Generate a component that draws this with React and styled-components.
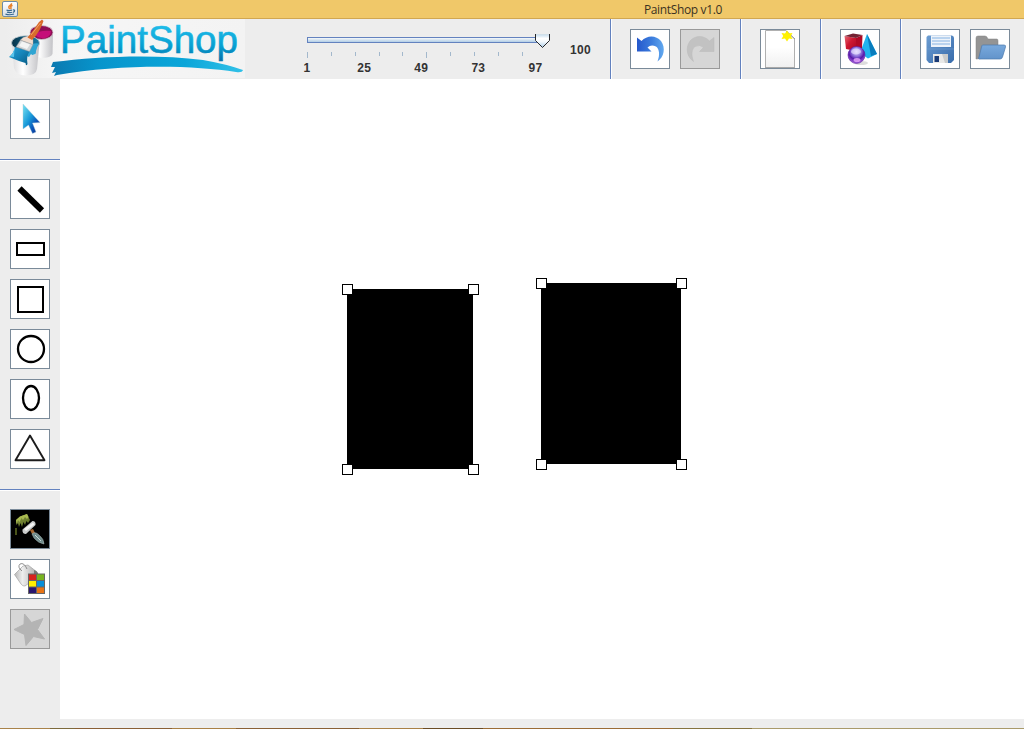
import React from 'react';
import styled, { createGlobalStyle, css } from 'styled-components';

const GlobalStyle = createGlobalStyle`
  * { box-sizing: border-box; }
  body { margin: 0; background: #ededed; overflow: hidden; }
  svg { display: block; }
`;

const Window = styled.div`
  width: 1024px;
  height: 729px;
  display: flex;
  flex-direction: column;
  background: #ededed;
  font-family: 'Liberation Sans', Arial, sans-serif;
`;

const TitleBar = styled.header`
  height: 19px;
  flex: none;
  display: flex;
  align-items: center;
  background: #f0c869;
  border-bottom: 1px solid #d1a751;
  padding-left: 2px;
`;

const Title = styled.h1`
  flex: 1;
  margin: 0;
  padding: 2px 0 0 324px;
  text-align: center;
  font: 400 12px/18px 'Open Sans', sans-serif;
  letter-spacing: -0.35px;
  color: #3b3222;
`;

const Toolbar = styled.div`
  height: 60px;
  flex: none;
  display: flex;
`;

const Logo = styled.div`
  width: 245px;
  height: 60px;
  flex: none;
`;

const SizeControl = styled.div`
  width: 365px;
  height: 60px;
  display: flex;
  padding-left: 50px;
`;

const Slider = styled.div`
  width: 260px;
  padding-top: 15px;
`;

const SliderLabels = styled.div`
  display: grid;
  grid-template-columns: repeat(5, 57.1px);
  margin: -1px 0 0 -16.5px;
  width: 290px;
  text-align: center;
  font: bold 12px/14px 'Liberation Sans', sans-serif;
  letter-spacing: 0.2px;
  color: #333;
`;

const SizeValue = styled.output`
  margin-left: 15px;
  padding-top: 24px;
  font: bold 12px/14px 'Liberation Sans', sans-serif;
  letter-spacing: 0.3px;
  color: #333;
`;

const ToolGroup = styled.div`
  display: flex;
  align-items: center;
  gap: 10px;
  width: ${(p) => p.$width}px;
  padding-left: 19px;
  border-left: 1px solid #6382bf;
  box-shadow: inset 1px 0 #fff;
`;

const ToolButton = styled.button`
  width: 40px;
  height: 40px;
  flex: none;
  display: block;
  padding: 0;
  overflow: hidden;
  border: 1px solid #7a8a99;
  background: ${(p) => (p.$dark ? '#000' : '#fff')};
  ${(p) =>
    p.disabled &&
    css`
      border-color: #999;
      background: #d6d6d6;
    `}
`;

const Workspace = styled.div`
  height: 640px;
  display: flex;
`;

const Sidebar = styled.aside`
  width: 60px;
  flex: none;
`;

const SideGroup = styled.div`
  display: flex;
  flex-direction: column;
  align-items: center;
  gap: 10px;
  padding: 20px 0;
  & + & {
    border-top: 1px solid #6382bf;
    box-shadow: inset 0 1px #fff;
    padding-top: 19px;
  }
`;

const Canvas = styled.main`
  position: relative;
  flex: 1;
  background: #fff;
`;

const Shape = styled.div`
  position: absolute;
  left: ${(p) => p.$x}px;
  top: ${(p) => p.$y}px;
  width: ${(p) => p.$w}px;
  height: ${(p) => p.$h}px;
  background: #000;
`;

const Handle = styled.i`
  position: absolute;
  left: calc(${(p) => p.$h * 100}% - 5px);
  top: calc(${(p) => p.$v * 100}% - 5px);
  width: 11px;
  height: 11px;
  background: #fff;
  border: 1px solid #000;
`;

const StatusStrip = styled.footer`
  height: 10px;
  flex: none;
  border-bottom: 1px solid;
  border-image: linear-gradient(90deg, #a9834a 0 51px, #7d6a3c 51px 76px, #8a5f35 76px 173px, #a98045 173px 237px,
    #8a6035 237px 359px, #a98045 359px 423px, #6b4c25 423px 483px, #9b6c35 483px 673px, #86743f 673px 752px, #a99a6a 752px) 1;
`;

const Icon = ({ children }) => (
  <svg width="38" height="38" viewBox="1 1 38 38">{children}</svg>
);

const JavaIcon = () => (
  <svg width="16" height="16" viewBox="0 0 16 16">
    <defs>
      <linearGradient id="jbg" x2="0" y2="1"><stop stopColor="#fff" /><stop offset="1" stopColor="#d5dfe6" /></linearGradient>
    </defs>
    <rect x=".5" y=".5" width="15" height="15" rx="1.5" fill="url(#jbg)" stroke="#6d8ba3" />
    <path d="M9.5 2.2C10 4 6.400 4.500 6.800 6.200Q7 7 7.700 8M10.500 4.300C8.300 5.300 8.600 6 9 6.600Q9.300 7.400 8.500 8" fill="none" stroke="#e8822c" strokeWidth="1.500" />
    <path d="M4.500 9.200Q7 9.900 10 9.200M5 11.200Q8 12 10 11.200M3.500 13.200Q8 14.400 12 13M10.800 9Q13 8.500 12.500 10T10.800 11" fill="none" stroke="#38698f" strokeWidth="1.200" />
  </svg>
);

const LogoArt = () => (
  <svg width="245" height="60" viewBox="0 19 245 60">
    <defs>
      <linearGradient id="lbg"><stop stopColor="#ededed" /><stop offset=".25" stopColor="#f6f6f6" /><stop offset="1" stopColor="#f3f3f3" /></linearGradient>
      <linearGradient id="ltext" gradientUnits="userSpaceOnUse" x1="0" y1="25" x2="0" y2="60"><stop stopColor="#20bdea" /><stop offset=".6" stopColor="#07a0d2" /><stop offset="1" stopColor="#0673ab" /></linearGradient>
      <linearGradient id="swoosh"><stop stopColor="#0b79b0" /><stop offset=".25" stopColor="#0795cc" /><stop offset=".7" stopColor="#0ba6d9" /><stop offset="1" stopColor="#31c1e8" /></linearGradient>
      <linearGradient id="can"><stop stopColor="#dcdcde" /><stop offset=".4" stopColor="#fff" /><stop offset="1" stopColor="#c2c2c6" /></linearGradient>
      <linearGradient id="blueP" x2="1" y2="1"><stop stopColor="#2ba3d6" /><stop offset=".5" stopColor="#1583b8" /><stop offset="1" stopColor="#0a587e" /></linearGradient>
      <linearGradient id="rim"><stop stopColor="#083247" /><stop offset=".6" stopColor="#0e6288" /><stop offset="1" stopColor="#1b7ba6" /></linearGradient>
    </defs>
    <rect x="5" y="19" width="240" height="59" fill="url(#lbg)" />
    <path d="M30 33H53L52.500 54Q51 58 41 58L38 57Z" fill="url(#can)" />
    <ellipse cx="41.500" cy="32.500" rx="11.500" ry="7" fill="#8f0f55" stroke="#d0ccce" strokeWidth=".8" />
    <path d="M35 35Q38 30 51 31Q51 37 43 38.500Q38 38 35 35Z" fill="#c50e79" />
    <path d="M12 43L14 68Q16 75.500 26 75.500Q36 75.500 37 69L39.500 43Z" fill="url(#can)" />
    <ellipse cx="25.500" cy="43" rx="14" ry="7.300" fill="url(#rim)" stroke="#c4cfd4" strokeWidth=".8" />
    <path d="M28 49Q32 42 38.500 43.500Q37 48 36 51Q36 55 34 54Q33 56 31 54L29 57L27 56Z" fill="#2fa5d3" />
    <path d="M15 47L30 51Q26 56 27.500 64Q26 67 25.500 63Q22 62 19 61Q14 59 9 57Q14 53 15 47Z" fill="url(#blueP)" />
    <path d="M14.500 49Q13 54 10 56.500L14 57Z" fill="#59c5ed" />
    <path d="M20.500 40L33 44.500L29.500 51.500L16 47Z" fill="#d4d7d9" stroke="#8f979c" strokeWidth=".5" />
    <path d="M22 41.500L30 44.500L27 49L19 46Z" fill="#f4f4f4" />
    <path d="M23 37.500L28 36L33 39.500L33 44.500L20.500 40Z" fill="#f0ddd0" stroke="#b5aaa4" strokeWidth=".4" />
    <path d="M27.500 37.500Q34 30 39 22L42 19.500L43.500 21Q40 32 32 40Z" fill="#d86b2c" />
    <path d="M31 35L40.500 23" stroke="#f2a268" strokeWidth="1" />
    <text x="60" y="53" textLength="178" lengthAdjust="spacingAndGlyphs" fontFamily="Liberation Sans" fontSize="38" fill="url(#ltext)" stroke="url(#ltext)" strokeWidth=".6">PaintShop</text>
    <path d="M53 62C99 56 157 54 203 60Q226 64 243 70Q242 73 236 72C193 65 120 64 57 75L54 76L56 72L52 73L55 67L51 67Z" fill="url(#swoosh)" />
  </svg>
);

const SliderTrack = () => (
  <svg width="260" height="28" viewBox="295 34 260 28">
    <defs>
      <linearGradient id="track" x2="0" y2="1"><stop stopColor="#fff" /><stop offset=".3" stopColor="#e4edf4" /><stop offset="1" stopColor="#a9c8e4" /></linearGradient>
      <linearGradient id="thumb" x2="0" y2="1"><stop stopColor="#c5dced" /><stop offset=".3" stopColor="#fff" /><stop offset=".55" stopColor="#f4f9fd" /><stop offset="1" stopColor="#abcce8" /></linearGradient>
    </defs>
    <rect x="307.500" y="37.500" width="240" height="5" fill="url(#track)" stroke="#6382bf" />
    <path d="M535.500 34.500H549.500V40.500L542.500 47.500L535.500 40.500Z" fill="url(#thumb)" />
    <path d="M535.500 34V40.500L542.500 47.500L549.500 40.500V34" fill="none" stroke="#24272b" />
    <path d="M536 34.500H549" stroke="#d0dfe9" />
    {[307, 331, 355, 379, 402, 426, 450, 474, 498, 522].map((x, i) => (
      <rect key={x} x={x} y="52" width="1" height={i % 5 ? 4 : 6} fill="#a3b8cc" />
    ))}
  </svg>
);

const UndoIcon = () => (
  <Icon>
    <defs><linearGradient id="undo"><stop stopColor="#2558cc" /><stop offset=".55" stopColor="#3c7ddd" /><stop offset="1" stopColor="#62a9ef" /></linearGradient></defs>
    <path d="M7 8.500L11.500 12C17 6 26 6 31 12C36 19 34 28 27.500 32.500C30 26 29.500 20 26 17.500Q21 15 17.500 18.500L21.500 22.500H7Z" fill="url(#undo)" />
  </Icon>
);

const RedoIcon = () => (
  <Icon>
    <path d="M34 8.500L29.500 12C24 6 15 6 10 12C5 19 7 28 13.500 32.500C11 26 11.500 20 15 17.500Q20 15 23.500 18.500L19.500 22.500H34Z" fill="#c2c2c2" stroke="#bababa" strokeWidth=".5" />
  </Icon>
);

const NewIcon = () => (
  <Icon>
    <defs><linearGradient id="page" x2="0" y2="1"><stop offset=".45" stopColor="#fff" /><stop offset="1" stopColor="#f0f0f0" /></linearGradient></defs>
    <path d="M5.500 1.500H26L34.500 10V38.500H5.500Z" fill="url(#page)" stroke="#b0b0b0" />
    <path d="M5 38.500H35" stroke="#a8a8a8" />
    <path d="M26 2L35 10" stroke="#999" />
    <path d="M27 1.500L29 4.500L32.500 4L30.800 7L32.500 10L29 9.600L27 12.500L25 9.600L21.500 10L23.200 7L21.500 4L25 4.500Z" fill="#fff100" />
  </Icon>
);

const ShapesIcon = () => (
  <Icon>
    <defs>
      <linearGradient id="cube" x2="1" y2="1"><stop stopColor="#e56a76" /><stop offset=".45" stopColor="#ce1831" /><stop offset="1" stopColor="#a80522" /></linearGradient>
      <radialGradient id="ball" cx=".5" cy=".3" r=".7"><stop stopColor="#e7dcff" /><stop offset=".4" stopColor="#8d70da" /><stop offset=".65" stopColor="#5719aa" /><stop offset="1" stopColor="#a866e1" /></radialGradient>
    </defs>
    <ellipse cx="21" cy="34" rx="7" ry="2" fill="#ddd" />
    <path d="M27 5L37 25L28 29.500L20 24Z" fill="#20b4ee" />
    <path d="M27 5L37 25L31 27Z" fill="#087cbd" />
    <path d="M4.500 7L16 9V22L6 20Z" fill="url(#cube)" />
    <path d="M16 9L22.500 6L22 19L16 22Z" fill="#b00825" />
    <path d="M4.500 7L13 4.500L22.500 6L16 9Z" fill="#742233" />
    <circle cx="16.500" cy="26" r="8.500" fill="url(#ball)" stroke="#5c1b9f" strokeWidth=".6" />
    <ellipse cx="16" cy="22.500" rx="5" ry="3" fill="#eae4ff" opacity=".65" />
    <ellipse cx="17" cy="31" rx="3.500" ry="2" fill="#ecabff" opacity=".8" />
  </Icon>
);

const SaveIcon = () => (
  <Icon>
    <defs><linearGradient id="disk" x2="1" y2="1"><stop stopColor="#6c9dd2" /><stop offset="1" stopColor="#376bab" /></linearGradient></defs>
    <path d="M8 6.500H32Q34 7 34 9V31L31 34H9L6.500 31V8Z" fill="url(#disk)" />
    <path d="M11 6.500H31V18H11Z" fill="#edf3fa" />
    <path d="M12 9H30M12 12H30M12 15H30" stroke="#86b3e3" />
    <path d="M7 20H34" stroke="#719ed1" opacity=".6" />
    <rect x="13" y="25" width="15" height="9" fill="#e9e9e7" />
    <path d="M22 25H28V34H25Z" fill="#c9cbcb" />
    <rect x="14.500" y="27" width="4.500" height="6" fill="#1b3c77" />
  </Icon>
);

const OpenIcon = () => (
  <Icon>
    <defs><linearGradient id="folder" x2="0" y2="1"><stop stopColor="#79a9dc" /><stop offset="1" stopColor="#6294cb" /></linearGradient></defs>
    <path d="M6 30V9Q6 7 8 7H15Q17 7 18 10H27Q28 10 28 12V28Z" fill="#949494" stroke="#808080" strokeWidth=".5" />
    <path d="M12.500 16H34Q36 16 35.500 18L32.500 28Q32 30 30 30H9Q8 30 9 28L11.500 18Q12 16 12.500 16Z" fill="url(#folder)" stroke="#4c78ac" strokeWidth=".7" />
  </Icon>
);

const PointerIcon = () => (
  <Icon>
    <defs><linearGradient id="pointer" x2="1" y2="1"><stop stopColor="#79e4f3" /><stop offset=".45" stopColor="#1698d8" /><stop offset=".7" stopColor="#0c53b8" /><stop offset="1" stopColor="#062479" /></linearGradient></defs>
    <path d="M13 5V30L18.500 26L22.500 34.500L26 33L22.500 24L30 23.500Z" fill="url(#pointer)" stroke="#aac9d7" strokeWidth=".4" />
  </Icon>
);

const BrushIcon = () => (
  <Icon>
    <defs><linearGradient id="brush" x2="1" y2="1"><stop stopColor="#8c9c45" /><stop offset="1" stopColor="#54661f" /></linearGradient></defs>
    <path d="M6 11L10 7.500L17 5L20 11L18 14L16.500 12L15 16L13.500 13L12 18L10.500 14L9 18L8 14L6.500 16Z" fill="url(#brush)" />
    <path d="M6 11L10 7.500L17 5L18.500 8L17 10L15 8L13 11L11.500 9L9.500 13L8 11L6.500 15Z" fill="#a8b950" />
    <path d="M6 19V26" stroke="#788b2b" strokeWidth="1.200" />
    <path d="M12.500 20.500L22.500 12Q26 12 25.500 16L16 25Q12 25 12.500 20.500Z" fill="#c9cbcb" />
    <path d="M14 20L23 13.500L24.500 15.500L16 22Z" fill="#f5f5f5" />
    <path d="M20 21L23 20L25 24L22 25Z" fill="#a96731" />
    <path d="M22 25Q25 22 29 26Q34 30 34 35Q28 34 24 29Z" fill="#718c8c" stroke="#aebfbf" strokeWidth=".5" />
    <path d="M25 26L31 32" stroke="#c8d8d8" />
  </Icon>
);

const FillIcon = () => (
  <Icon>
    <defs><linearGradient id="bucket"><stop stopColor="#b5b5b5" /><stop offset=".35" stopColor="#eee" /><stop offset="1" stopColor="#aaa" /></linearGradient></defs>
    <path d="M4.500 15.500L13 7L18 6L27 13L22 22L15 27Q13 27.500 11 25Z" fill="url(#bucket)" stroke="#999" strokeWidth=".6" />
    <path d="M12 12Q7 8 10 5Q14 3 17 10" fill="none" stroke="#777" strokeWidth=".8" />
    <path d="M24 11Q29 13 28 16H24Z" fill="#777" />
    <rect x="18" y="14.500" width="17" height="20.500" fill="#666" />
    {['#d8231f', '#78b421', '#fff000', '#078fda', '#29166f', '#e87416'].map((fill, i) => (
      <rect key={fill} x={19 + (i % 2) * 8} y={15.5 + Math.floor(i / 2) * 6.5} width="7" height="5.500" fill={fill} />
    ))}
  </Icon>
);

const shapes = [
  { x: 287, y: 210, w: 126, h: 180 },
  { x: 481, y: 204, w: 140, h: 181 },
];

export default function App() {
  return (
    <Window>
      <GlobalStyle />
      <TitleBar>
        <JavaIcon />
        <Title>PaintShop v1.0</Title>
      </TitleBar>
      <Toolbar>
        <Logo><LogoArt /></Logo>
        <SizeControl>
          <Slider>
            <SliderTrack />
            <SliderLabels>
              {[1, 25, 49, 73, 97].map((n) => <span key={n}>{n}</span>)}
            </SliderLabels>
          </Slider>
          <SizeValue>100</SizeValue>
        </SizeControl>
        <ToolGroup $width={130}>
          <ToolButton aria-label="Undo"><UndoIcon /></ToolButton>
          <ToolButton aria-label="Redo" disabled><RedoIcon /></ToolButton>
        </ToolGroup>
        <ToolGroup $width={80}><ToolButton aria-label="New"><NewIcon /></ToolButton></ToolGroup>
        <ToolGroup $width={80}><ToolButton aria-label="Shapes"><ShapesIcon /></ToolButton></ToolGroup>
        <ToolGroup $width={124}>
          <ToolButton aria-label="Save"><SaveIcon /></ToolButton>
          <ToolButton aria-label="Open"><OpenIcon /></ToolButton>
        </ToolGroup>
      </Toolbar>
      <Workspace>
        <Sidebar>
          <SideGroup><ToolButton aria-label="Select"><PointerIcon /></ToolButton></SideGroup>
          <SideGroup>
            <ToolButton aria-label="Line"><Icon><path d="M9.500 9.500L32 31.500" stroke="#000" strokeWidth="6" /></Icon></ToolButton>
            <ToolButton aria-label="Rectangle"><Icon><rect x="7" y="14" width="27" height="12" fill="none" stroke="#000" strokeWidth="2" /></Icon></ToolButton>
            <ToolButton aria-label="Square"><Icon><rect x="8" y="8" width="25" height="25" fill="none" stroke="#000" strokeWidth="2" /></Icon></ToolButton>
            <ToolButton aria-label="Circle"><Icon><circle cx="21" cy="20" r="13" fill="none" stroke="#000" strokeWidth="2.300" /></Icon></ToolButton>
            <ToolButton aria-label="Ellipse"><Icon><ellipse cx="21" cy="19" rx="8" ry="12" fill="none" stroke="#000" strokeWidth="2.300" /></Icon></ToolButton>
            <ToolButton aria-label="Triangle"><Icon><path d="M20 6.500L34.500 31.300H5.500Z" fill="none" stroke="#1c1c1c" strokeWidth="1.900" strokeLinejoin="round" /></Icon></ToolButton>
          </SideGroup>
          <SideGroup>
            <ToolButton aria-label="Stroke color" $dark><BrushIcon /></ToolButton>
            <ToolButton aria-label="Fill color"><FillIcon /></ToolButton>
            <ToolButton aria-label="Effects" disabled>
              <Icon><path d="M14.500 5L21.500 13.500L33 9.500L27.500 20.500L34.500 30L23.500 27.500L16 36.500L14.500 25.500L4 20.500L14 15.500Z" fill="#b4b4b4" stroke="#b4b4b4" strokeLinejoin="round" /></Icon>
            </ToolButton>
          </SideGroup>
        </Sidebar>
        <Canvas>
          {shapes.map((s) => (
            <Shape key={s.x} $x={s.x} $y={s.y} $w={s.w} $h={s.h}>
              {[0, 1].map((h) => [0, 1].map((v) => <Handle key={`${h}${v}`} $h={h} $v={v} />))}
            </Shape>
          ))}
        </Canvas>
      </Workspace>
      <StatusStrip />
    </Window>
  );
}
